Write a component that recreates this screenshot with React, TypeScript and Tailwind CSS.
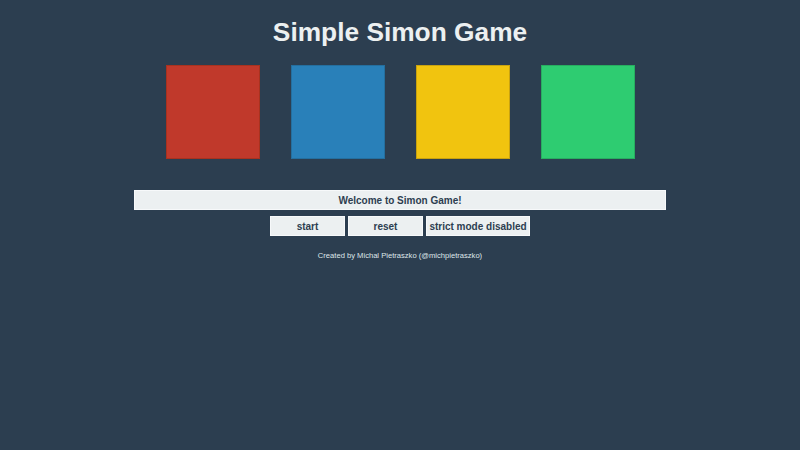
const pads = [
  { name: "red", cls: "bg-[#c0392b] border-[#a8321f]" },
  { name: "blue", cls: "bg-[#2980b9] border-[#246f9f]" },
  { name: "yellow", cls: "bg-[#f1c40f] border-[#c9a20f]" },
  { name: "green", cls: "bg-[#2ecc71] border-[#27ae60]" },
];

const btn =
  "flex h-[20px] items-center justify-center whitespace-nowrap border border-[#f7f9fa] bg-[#ecf0f1]";

export default function App() {
  return (
    <div className="min-h-[450px] w-full bg-[#2c3e50] font-['Liberation_Sans',Arial,sans-serif] text-[#ecf0f1]">
      <div className="flex flex-col items-center pt-[16px]">
        <h1 className="text-[26.3px] font-bold leading-[32px]">Simple Simon Game</h1>

        <div className="mt-[17px] flex gap-[31px]">
          {pads.map((p) => (
            <div key={p.name} className={`h-[94px] w-[94px] border ${p.cls}`} />
          ))}
        </div>

        <div className={`mt-[31px] w-[532px] text-[10px] font-bold text-[#2c3e50] ${btn}`}>
          Welcome to Simon Game!
        </div>

        <div className="mt-[6px] flex gap-[3px] text-[10px] font-bold text-[#2c3e50]">
          <button className={`w-[75px] ${btn}`}>start</button>
          <button className={`w-[75px] ${btn}`}>reset</button>
          <button className={`w-[104px] ${btn}`}>strict mode disabled</button>
        </div>

        <p className="mt-[14px] whitespace-nowrap text-[7.6px] leading-[12px] text-[#dfe6ea]">
          Created by Michal Pietraszko (@michpietraszko)
        </p>
      </div>
    </div>
  );
}
